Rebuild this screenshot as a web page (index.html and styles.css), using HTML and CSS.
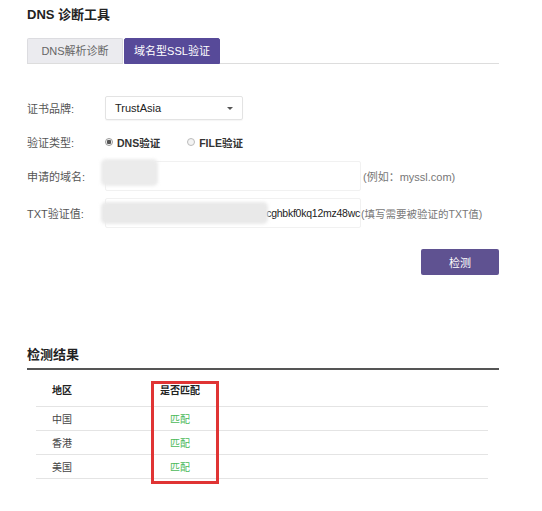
FILE: index.html
```html
<!DOCTYPE html>
<html>
<head>
<meta charset="utf-8">
<link rel="stylesheet" href="styles.css">
</head>
<body>
<div class="page">
  <h1 class="title">DNS 诊断工具</h1>
  <div class="tabs">
    <div class="tab">DNS解析诊断</div>
    <div class="tab active">域名型SSL验证</div>
    <div class="tab-fill"></div>
  </div>

  <div class="form">
    <div class="row r1">
      <div class="label">证书品牌:</div>
      <div class="select"><span>TrustAsia</span><span class="caret"></span></div>
    </div>
    <div class="row r2">
      <div class="label">验证类型:</div>
      <div class="radios">
        <span class="radio on"></span><span class="rlabel">DNS验证</span>
        <span class="radio"></span><span class="rlabel">FILE验证</span>
      </div>
    </div>
    <div class="row r3">
      <div class="label">申请的域名:</div>
      <div class="field domain"><span class="blur b-domain"></span></div>
      <div class="hint">(例如：myssl.com)</div>
    </div>
    <div class="row r4">
      <div class="label">TXT验证值:</div>
      <div class="field txt"><span class="val">cghbkf0kq12mz48wc</span><span class="blur b-txt"></span></div>
      <div class="hint tight">(填写需要被验证的TXT值)</div>
    </div>
    <div class="actions"><button class="btn">检测</button></div>
  </div>

  <h2 class="section">检测结果</h2>
  <div class="results">
    <div class="trow head"><div class="c1">地区</div><div class="c2">是否匹配</div><div class="c3"></div></div>
    <div class="trow"><div class="c1">中国</div><div class="c2 ok">匹配</div><div class="c3"></div></div>
    <div class="trow"><div class="c1">香港</div><div class="c2 ok">匹配</div><div class="c3"></div></div>
    <div class="trow"><div class="c1">美国</div><div class="c2 ok">匹配</div><div class="c3"></div></div>
    <div class="mark"></div>
  </div>
</div>
</body>
</html>
```

FILE: styles.css
```css
* { box-sizing: border-box; }
html, body { margin: 0; padding: 0; background: #fff; }
body {
  font-family: "Liberation Sans", "Noto Sans CJK SC", sans-serif;
  font-size: 11px;
  color: #555;
  min-height: 511px;
}
.page { width: 499px; padding: 5px 0 30px 27px; }
.title { margin: 0; font-size: 13px; line-height: 20px; font-weight: bold; color: #222; }

.tabs { display: flex; margin-top: 13px; height: 26px; }
.tab {
  width: 96px; height: 26px; line-height: 24px; text-align: center;
  background: #ebebef; border: 1px solid #dcdce0; border-bottom-color: #ddd;
  color: #666; font-size: 11px; border-radius: 2px 2px 0 0;
}
.tab.active { background: #574a99; border-color: #574a99; color: #fff; margin-left: 1px; }
.tab-fill { flex: 1; border-bottom: 1px solid #ddd; }

.form { padding-top: 32px; }
.row { display: flex; align-items: center; height: 24px; position: relative; }
.r2 { margin-top: 10px; }
.r3 { margin-top: 7px; height: 30px; }
.r4 { margin-top: 7px; height: 30px; }
.label { width: 78px; color: #555; flex-shrink: 0; }
.select {
  width: 138px; height: 24px; border: 1px solid #e3e3e3; border-radius: 2px;
  display: flex; align-items: center; justify-content: space-between;
  padding: 0 9px 0 9px; color: #222; font-size: 11px;
  box-shadow: 0 1px 1px rgba(0,0,0,0.04);
}
.caret { width: 0; height: 0; border-left: 3px solid transparent; border-right: 3px solid transparent; border-top: 3px solid #555; }
.radios { display: flex; align-items: center; color: #333; font-weight: bold; font-size: 10.5px; }
.radio { width: 8px; height: 8px; border-radius: 50%; border: 1px solid #bbb; background: #f4f4f4; margin-right: 4px; }
.radio.on { background: radial-gradient(circle, #555 0 2px, #f4f4f4 2.5px); border-color: #999; }
.rlabel { margin-right: 27px; }
.field {
  width: 256px; height: 30px; border: 1px solid #f1f1f1; border-radius: 2px; flex-shrink: 0;
  display: flex; align-items: center; justify-content: flex-end; position: relative;
  color: #222; font-size: 10.5px;
}
.val { white-space: nowrap; letter-spacing: -0.25px; }
.blur { position: absolute; background: #e9e9e9; border-radius: 5px; filter: blur(1.5px); }
.b-domain { left: -5px; top: -3px; width: 57px; height: 27px; background: #ebebeb; }
.b-txt { left: -5px; top: 3px; width: 167px; height: 22px; }
.hint { margin-left: 2px; color: #777; font-size: 11px; white-space: nowrap; }
.hint.tight { margin-left: 0; font-size: 10.5px; }
.actions { display: flex; justify-content: flex-end; margin-top: 21px; }
.btn {
  width: 78px; height: 26px; border: 0; border-radius: 2px; background: #5f5291;
  color: #fff; font-family: inherit; font-size: 11px; padding: 0;
}

.section {
  margin: 70px 0 0 0; font-size: 13px; line-height: 20px; font-weight: bold; color: #222;
  padding-bottom: 3px; border-bottom: 2px solid #555;
}
.results { position: relative; margin-left: 9px; width: 452px; margin-top: 4px; padding-bottom: 12px; }
.trow { display: flex; height: 24px; align-items: center; border-bottom: 1px solid #e4e4e4; font-size: 10px; color: #444; }
.trow.last { height: 23px; }
.trow.head { height: 33px; padding-bottom: 1px; font-weight: bold; color: #222; }
.c1 { width: 115px; padding-left: 16px; }
.c2 { width: 58px; text-align: center; }
.c3 { flex: 1; }
.ok { color: #4cba5a; }
.mark { position: absolute; left: 115px; top: 7px; width: 68px; height: 103px; border: 3px solid #e03434; }
```
